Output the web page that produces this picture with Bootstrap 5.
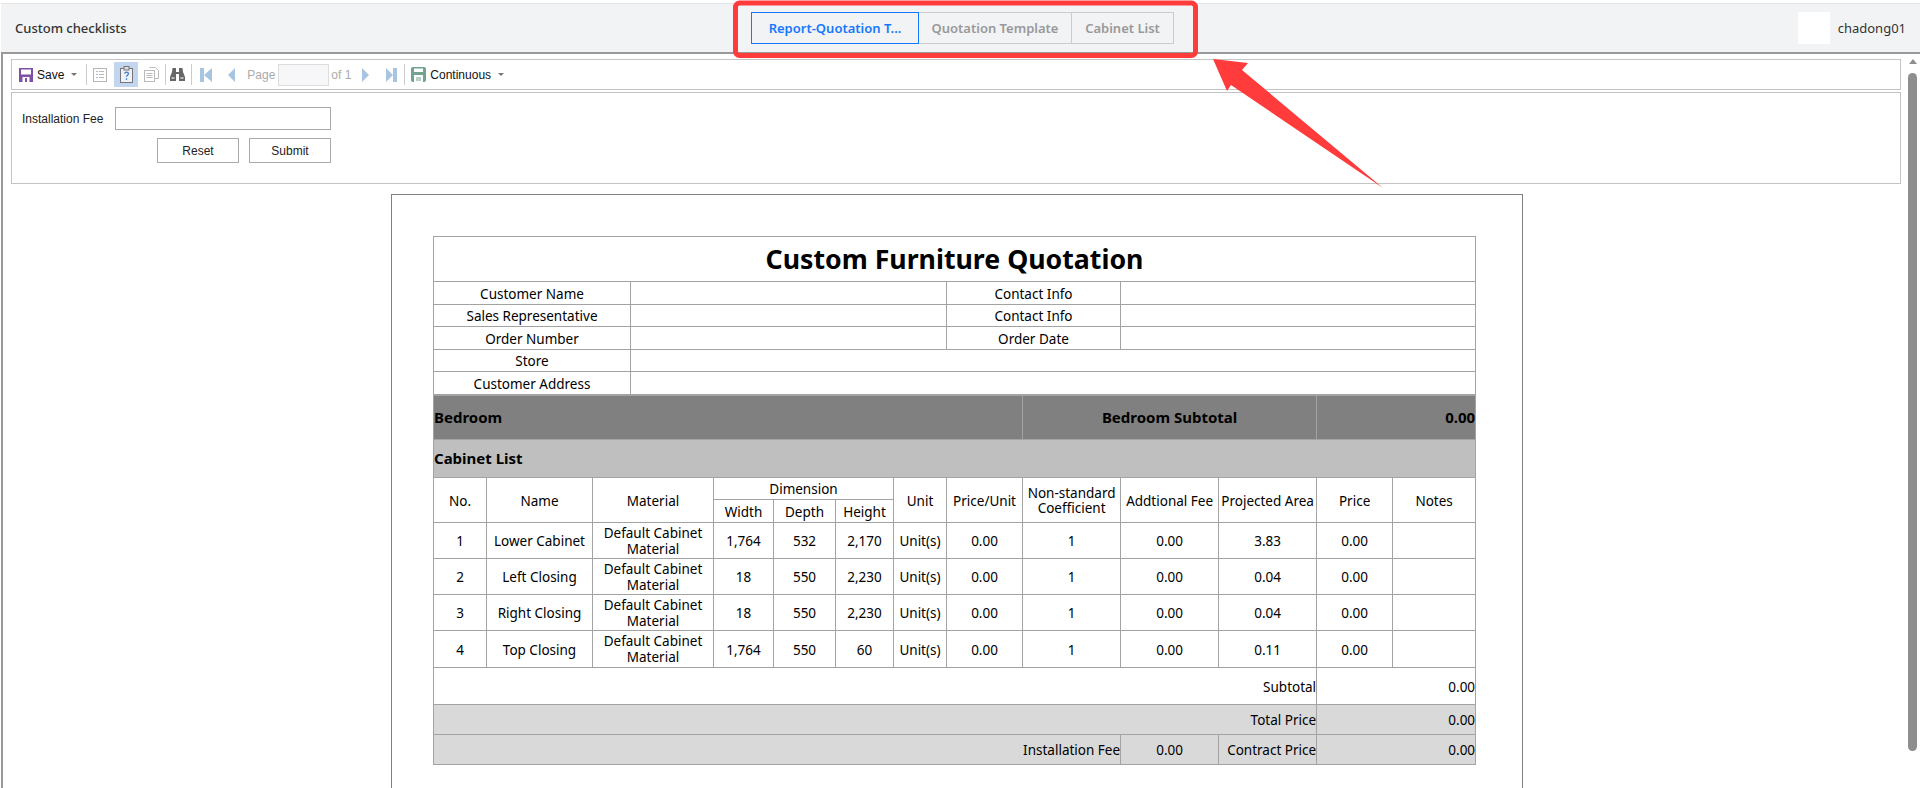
<!DOCTYPE html>
<html lang="en">
<head>
    <meta charset="UTF-8">
    <title>Custom checklists</title>
    <link href="https://cdn.jsdelivr.net/npm/bootstrap@5.3.2/dist/css/bootstrap.min.css" rel="stylesheet">
    <style>
        html, body { height: 788px; overflow: hidden; }
        body { position: relative; background: #fff; font-family: "Noto Sans", sans-serif; color: #000; }

        /* top bar */
        .top-bar { height: 51px; margin: 3px 0 0 1px; background: #f2f3f5; border-top: 1px solid #e4e4e4; border-bottom: 2px solid #999; padding: 0 14px; }
        .top-title { font-size: 13px; font-weight: 500; color: #333; width: 737px; padding-top: 2px; }
        .tab-btn { height: 32px; font-size: 13px; font-weight: 600; color: #999; background: transparent; border: 1px solid #ccc; border-radius: 0; padding: 0; line-height: 31px; text-align: center; margin-left: -1px; white-space: nowrap; }
        .tab-btn.on { color: #1677ff; border-color: #1677ff; position: relative; z-index: 1; }
        .tab-a { width: 168px; }
        .tab-b { width: 154px; }
        .tab-c { width: 103px; }
        .avatar-box { width: 32px; height: 32px; background: #fff; }
        .user-name { font-size: 13px; color: #333; margin-left: 8px; padding-top: 2px; }

        /* viewer */
        .viewer { height: 734px; margin-left: 1px; border-left: 2px solid #999; overflow: hidden; }
        .viewer-main { padding: 5px 4px 0 8px; min-width: 0; }
        .tool-bar { height: 31px; border: 1px solid #c4c4c4; padding-left: 7px; font-family: "Liberation Sans", Arial, sans-serif; font-size: 12px; color: #111; white-space: nowrap; }
        .tool-ico { display: block; flex: none; }
        .tool-sep { width: 1px; height: 21px; background: #ccc; flex: none; }
        .tool-caret { width: 0; height: 0; border: 3px solid transparent; border-top: 3px solid #777; border-bottom: 0; flex: none; }
        .tool-on { width: 24px; height: 25px; background: #c3d6f0; flex: none; }
        .tool-dim { color: #aaa; flex: none; }
        .page-box { width: 51px; height: 22px; background: #f7f7fa; border: 1px solid #ddd; flex: none; }

        .filter-box { height: 92px; margin-top: 2px; border: 1px solid #c4c4c4; padding: 14px 0 0 10px; font-family: "Liberation Sans", Arial, sans-serif; font-size: 12px; color: #222; }
        .filter-label { width: 93px; }
        .filter-input { width: 216px; height: 23px; border: 1px solid #aaa; border-radius: 0; padding: 0 4px; min-height: 0; }
        .filter-btns { margin: 8px 0 0 135px; gap: 10px; }
        .filter-btn { width: 82px; height: 25px; padding: 2px 0 0; font-size: 12px; line-height: 21px; border: 1px solid #aaa; border-radius: 0; background: #fff; color: #222; }

        /* report sheet */
        .sheet { width: 1132px; height: 700px; margin: 10px 0 0 380px; border: 1px solid #808080; padding: 41px 0 0 41px; }
        .quote-table { width: 1042px; table-layout: fixed; margin: 0; --bs-table-border-color: #a3a3a3; border-color: #a3a3a3; font-size: 13.5px; line-height: 15px; }
        .quote-table td { padding: 2px 0 0; text-align: center; vertical-align: middle; color: #000; overflow: hidden; }
        .quote-table.next-part tr:first-child td { border-top: 0; }
        .quote-table td.txt-end { text-align: right; }
        .quote-table td.txt-start { text-align: left; }
        .quote-table td.fill-dark { background: #808080; font-weight: 700; font-size: 15px; padding: 0; }
        .quote-table td.fill-mid { background: #bfbfbf; font-weight: 700; font-size: 15px; padding: 0; }
        .quote-table td.fill-light { background: #d9d9d9; }
        .quote-table td.sheet-title { font-size: 26.7px; font-weight: 700; line-height: 36px; padding: 0; }
        .quote-table td.two-line { line-height: 16px; padding: 0; }
        .h-45 { height: 45px; } .h-44 { height: 44px; } .h-23 { height: 23px; } .h-22 { height: 22px; } .h-38 { height: 38px; }
        .h-36 { height: 36px; } .h-37 { height: 37px; } .h-30 { height: 30px; }

        /* scrollbar */
        .fake-scroll { width: 15px; flex: none; padding: 5px 3px 0 3px; }
        .fake-up { width: 0; height: 0; margin: 0 auto; border: 4.5px solid transparent; border-bottom: 5px solid #8e8e8e; border-top: 0; }
        .fake-thumb { width: 9px; height: 678px; margin-top: 9px; background: #8e8e8e; border-radius: 5px; }

        /* annotation on top of the screenshot */
        .mark-layer { position: absolute; left: 0; top: 0; pointer-events: none; z-index: 5; }
    </style>
</head>
<body>
    <header class="top-bar d-flex align-items-center">
        <div class="top-title">Custom checklists</div>
        <div class="d-flex">
            <button class="tab-btn tab-a on">Report-Quotation T...</button>
            <button class="tab-btn tab-b">Quotation Template</button>
            <button class="tab-btn tab-c">Cabinet List</button>
        </div>
        <div class="ms-auto d-flex align-items-center">
            <div class="avatar-box"></div>
            <span class="user-name">chadong01</span>
        </div>
    </header>

    <div class="viewer d-flex">
        <div class="viewer-main flex-grow-1">
            <div class="tool-bar d-flex align-items-center">
                <svg class="tool-ico" width="14" height="14" viewBox="0 0 14 14"><path fill="#7d4fa5" d="M0 0h14v14H0z"/><path fill="#fff" d="M2 1.500h10v5H2zM3.500 9h7v5h-7z"/><path fill="#7d4fa5" d="M6 10h2v4H6z"/></svg>
                <span class="ms-1">Save</span>
                <span class="tool-caret" style="margin-left:7px"></span>
                <span class="tool-sep" style="margin-left:9px"></span>
                <svg class="tool-ico" style="margin-left:6px" width="14" height="14" viewBox="0 0 14 14"><rect x=".5" y=".5" width="13" height="13" fill="#fff" stroke="#b5b5b5"/><path stroke="#a8c0de" d="M3 3.500h2M3 6.500h2M3 9.500h2"/><path stroke="#bbb" d="M6 3.500h5M6 6.500h5M6 9.500h5"/></svg>
                <span class="tool-on d-flex align-items-center justify-content-center" style="margin-left:7px">
                    <svg class="tool-ico" width="13" height="17" viewBox="0 0 13 17"><rect x=".5" y="2.500" width="12" height="14" fill="#eef2f8" stroke="#777"/><rect x="4" y=".5" width="5" height="3.500" fill="#ddd" stroke="#777"/><path fill="none" stroke="#3f78c4" stroke-width="1.300" d="M4.700 7.600c.2-2 3.700-2 3.700.1 0 1.500-1.900 1.400-1.900 3"/><path stroke="#3f78c4" stroke-width="1.400" d="M6.500 12.300v1.500"/></svg>
                </span>
                <svg class="tool-ico" style="margin-left:6px" width="15" height="15" viewBox="0 0 15 15"><path fill="#fff" stroke="#bbb" d="M5.500.5h6l3 3v8h-4"/><rect x=".5" y="3.500" width="10" height="11" fill="#fff" stroke="#bbb"/><path stroke="#bbb" d="M2.500 6.500h6M2.500 8.500h6M2.500 10.500h6"/></svg>
                <span class="tool-sep" style="margin-left:6px"></span>
                <svg class="tool-ico" style="margin-left:4px" width="15" height="13" viewBox="0 0 15 13"><path fill="#666" d="M2.500 0h3.500v4h3V0h3.500l.5 4 2 5v4H9V6H6v7H0V9l2-5z"/><path fill="#bbb" d="M1.500 9h3v2h-3zM10.500 9h3v2h-3z"/></svg>
                <span class="tool-sep" style="margin-left:6px"></span>
                <svg class="tool-ico" style="margin-left:8px" width="12" height="14" viewBox="0 0 12 14"><path fill="#a7c5e0" d="M0 0h4v14H0zM12 0v14L4 7z"/></svg>
                <svg class="tool-ico" style="margin-left:16px" width="7" height="14" viewBox="0 0 7 14"><path fill="#a7c5e0" d="M7 0v14L0 7z"/></svg>
                <span class="tool-dim" style="margin-left:12px;width:31px">Page</span>
                <span class="page-box"></span>
                <span class="tool-dim" style="margin-left:2px;width:19px">of 1</span>
                <svg class="tool-ico" style="margin-left:12px" width="7" height="14" viewBox="0 0 7 14"><path fill="#a7c5e0" d="M0 0v14l7-7z"/></svg>
                <svg class="tool-ico" style="margin-left:17px" width="11" height="14" viewBox="0 0 11 14"><path fill="#a7c5e0" d="M0 0v14l7-7zM7 0h4v14H7z"/></svg>
                <span class="tool-sep" style="margin-left:7px"></span>
                <svg class="tool-ico" style="margin-left:6px" width="15" height="15" viewBox="0 0 15 15"><rect width="15" height="15" rx="2" fill="#6fa58f"/><path fill="#fff" d="M3 1.500h9v3.500H3zM3 8h9v7H3z"/><path stroke="#6fa58f" d="M5 11h5M5 13h5"/></svg>
                <span style="margin-left:4px">Continuous</span>
                <span class="tool-caret" style="margin-left:7px"></span>
            </div>

            <form class="filter-box">
                <div class="d-flex align-items-center">
                    <label class="filter-label">Installation Fee</label>
                    <input class="form-control filter-input" type="text">
                </div>
                <div class="filter-btns d-flex">
                    <button type="button" class="btn filter-btn">Reset</button>
                    <button type="button" class="btn filter-btn">Submit</button>
                </div>
            </form>

            <div class="sheet">
                <table class="table table-bordered quote-table">
                    <colgroup><col style="width:197px"><col style="width:316px"><col style="width:174px"><col style="width:355px"></colgroup>
                    <tr class="h-45"><td colspan="4" class="sheet-title">Custom Furniture Quotation</td></tr>
                    <tr class="h-23"><td>Customer Name</td><td></td><td>Contact Info</td><td></td></tr>
                    <tr class="h-22"><td>Sales Representative</td><td></td><td>Contact Info</td><td></td></tr>
                    <tr class="h-23"><td>Order Number</td><td></td><td>Order Date</td><td></td></tr>
                    <tr class="h-22"><td>Store</td><td colspan="3"></td></tr>
                    <tr class="h-23"><td>Customer Address</td><td colspan="3"></td></tr>
                </table>
                <table class="table table-bordered quote-table next-part">
                    <colgroup>
                        <col style="width:53px"><col style="width:106px"><col style="width:121px"><col style="width:60px"><col style="width:62px"><col style="width:58px"><col style="width:53px">
                        <col style="width:76px"><col style="width:98px"><col style="width:98px"><col style="width:98px"><col style="width:76px"><col style="width:83px">
                    </colgroup>
                    <tr class="h-44">
                        <td colspan="8" class="fill-dark txt-start">Bedroom</td>
                        <td colspan="3" class="fill-dark">Bedroom Subtotal</td>
                        <td colspan="2" class="fill-dark txt-end">0.00</td>
                    </tr>
                    <tr class="h-38"><td colspan="13" class="fill-mid txt-start">Cabinet List</td></tr>
                    <tr class="h-22">
                        <td rowspan="2">No.</td><td rowspan="2">Name</td><td rowspan="2">Material</td>
                        <td colspan="3">Dimension</td>
                        <td rowspan="2">Unit</td><td rowspan="2">Price/Unit</td>
                        <td rowspan="2">Non-standard<br>Coefficient</td>
                        <td rowspan="2">Addtional Fee</td><td rowspan="2">Projected Area</td>
                        <td rowspan="2">Price</td><td rowspan="2">Notes</td>
                    </tr>
                    <tr class="h-23"><td>Width</td><td>Depth</td><td>Height</td></tr>
                    <tr class="h-36"><td>1</td><td>Lower Cabinet</td><td class="two-line">Default Cabinet<br>Material</td><td>1,764</td><td>532</td><td>2,170</td><td>Unit(s)</td><td>0.00</td><td>1</td><td>0.00</td><td>3.83</td><td>0.00</td><td></td></tr>
                    <tr class="h-36"><td>2</td><td>Left Closing</td><td class="two-line">Default Cabinet<br>Material</td><td>18</td><td>550</td><td>2,230</td><td>Unit(s)</td><td>0.00</td><td>1</td><td>0.00</td><td>0.04</td><td>0.00</td><td></td></tr>
                    <tr class="h-36"><td>3</td><td>Right Closing</td><td class="two-line">Default Cabinet<br>Material</td><td>18</td><td>550</td><td>2,230</td><td>Unit(s)</td><td>0.00</td><td>1</td><td>0.00</td><td>0.04</td><td>0.00</td><td></td></tr>
                    <tr class="h-37"><td>4</td><td>Top Closing</td><td class="two-line">Default Cabinet<br>Material</td><td>1,764</td><td>550</td><td>60</td><td>Unit(s)</td><td>0.00</td><td>1</td><td>0.00</td><td>0.11</td><td>0.00</td><td></td></tr>
                    <tr class="h-37"><td colspan="11" class="txt-end">Subtotal</td><td colspan="2" class="txt-end">0.00</td></tr>
                    <tr class="h-30"><td colspan="11" class="fill-light txt-end">Total Price</td><td colspan="2" class="fill-light txt-end">0.00</td></tr>
                    <tr class="h-30"><td colspan="9" class="fill-light txt-end">Installation Fee</td><td class="fill-light">0.00</td><td class="fill-light txt-end">Contract Price</td><td colspan="2" class="fill-light txt-end">0.00</td></tr>
                </table>
            </div>
        </div>
        <div class="fake-scroll">
            <div class="fake-up"></div>
            <div class="fake-thumb"></div>
        </div>
    </div>

    <svg class="mark-layer" width="1920" height="788" viewBox="0 0 1920 788">
        <rect x="735.5" y="3" width="460" height="52.500" rx="4" fill="none" stroke="#ff3b3b" stroke-width="5"/>
        <path fill="#ff3b3b" d="M1213 59l35 4-6 7 141 118-152-103-4 6z"/>
    </svg>
    <script src="https://cdn.jsdelivr.net/npm/bootstrap@5.3.2/dist/js/bootstrap.bundle.min.js"></script>
</body>
</html>
